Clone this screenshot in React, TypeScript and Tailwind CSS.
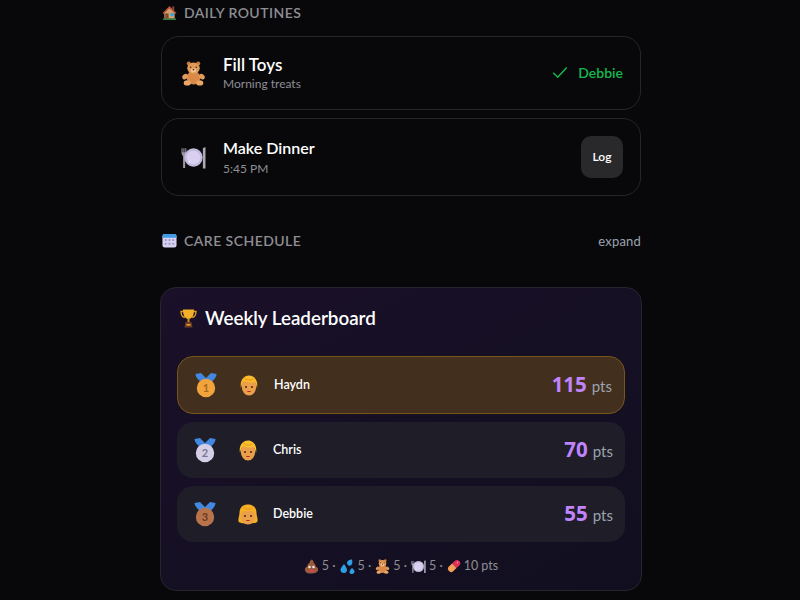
const font = { fontFamily: 'Lato, "Noto Sans", sans-serif' };
const digits = { fontFamily: '"Noto Sans", sans-serif' };

function House({ s = 15 }: { s?: number }) {
  return (
    <svg width={s} height={s} viewBox="0 0 16 16">
      <path d="M2.5 8v6.5h11V8L8 3z" fill="#d9a066" />
      <path d="M0.5 8.5L8 1l7.5 7.5-1 1L8 3.6 1.5 9.5z" fill="#b5533c" />
      <rect x="11" y="1.5" width="2" height="4" fill="#8a4a3a" />
      <rect x="3.5" y="9" width="3.5" height="5.5" fill="#7a4a34" />
      <rect x="9" y="8.5" width="3.5" height="3.5" fill="#38a3e0" />
      <rect x="1" y="14.5" width="14" height="1.2" fill="#3fae5a" />
    </svg>
  );
}

function Teddy({ s = 25 }: { s?: number }) {
  return (
    <svg width={s} height={s} viewBox="0 0 24 24">
      <circle cx="7.5" cy="2.5" r="2" fill="#c97a3a" />
      <circle cx="16.5" cy="2.5" r="2" fill="#c97a3a" />
      <ellipse cx="12" cy="16" rx="6.5" ry="6.5" fill="#d98a48" />
      <ellipse cx="4" cy="15" rx="3" ry="2.4" transform="rotate(-40 4 15)" fill="#e39a5a" />
      <ellipse cx="20" cy="15" rx="3" ry="2.4" transform="rotate(40 20 15)" fill="#e39a5a" />
      <ellipse cx="12" cy="7" rx="6" ry="5.5" fill="#e09a58" />
      <ellipse cx="12" cy="9" rx="2.6" ry="2" fill="#f4c48c" />
      <circle cx="9.3" cy="6" r="0.8" fill="#4a2a18" />
      <circle cx="14.7" cy="6" r="0.8" fill="#4a2a18" />
      <circle cx="12" cy="8.3" r="0.8" fill="#4a2a18" />
      <ellipse cx="6" cy="21" rx="3.4" ry="2.6" fill="#eba666" />
      <ellipse cx="18" cy="21" rx="3.4" ry="2.6" fill="#eba666" />
    </svg>
  );
}

function Plate({ s = 25 }: { s?: number }) {
  return (
    <svg width={s} height={s} viewBox="0 0 24 24">
      <path d="M0.5 3h1v4h.8V3h1v4h.8V3h1v5.5L4 11v11H2V11L0.5 8.5z" fill="#9a96a3" />
      <path d="M21 3l2.5-1v20.5H21z" fill="#aeaab5" />
      <circle cx="12" cy="12" r="8.8" fill="#c4bcdc" />
      <circle cx="12" cy="12" r="6.5" fill="#d8d0ee" />
      <circle cx="8" cy="16" r="0.8" fill="#f2eefc" />
    </svg>
  );
}

function Calendar({ s = 15 }: { s?: number }) {
  return (
    <svg width={s} height={s} viewBox="0 0 16 16">
      <rect x="0.5" y="1" width="15" height="14.5" rx="2.5" fill="#d6d2ee" />
      <path d="M0.5 5V3.5A2.5 2.5 0 0 1 3 1h10a2.5 2.5 0 0 1 2.5 2.5V5z" fill="#3f9ae8" />
      <g fill="#9c96c8">
        <rect x="3" y="6.5" width="2" height="2" />
        <rect x="7" y="6.5" width="2" height="2" />
        <rect x="11" y="6.5" width="2" height="2" />
        <rect x="3" y="10.5" width="2" height="2" />
        <rect x="7" y="10.5" width="2" height="2" />
        <rect x="11" y="10.5" width="2" height="2" />
      </g>
    </svg>
  );
}

function Trophy() {
  return (
    <svg width="17" height="19" viewBox="0 0 17 19">
      <path d="M3.5 2.5H1c0 4 1.2 5.5 3.8 6M13.5 2.5H16c0 4-1.2 5.5-3.8 6" fill="none" stroke="#e8a020" strokeWidth="1.3" />
      <path d="M3 0.5h11c0 5-1 9-5.5 9.5C4 9.5 3 5.5 3 0.5z" fill="#f4b029" />
      <path d="M7.5 9.5h2v4h-2z" fill="#d98e1c" />
      <path d="M5.5 13h6l1 5.5h-8z" fill="#6b3a2a" />
      <rect x="6.5" y="15" width="4" height="1.6" fill="#e8a020" />
    </svg>
  );
}

function Medal({ n, fill, ink }: { n: string; fill: string; ink: string }) {
  return (
    <svg width="22" height="25" viewBox="0 0 22 25">
      <path d="M0.5 1L6 0l5 5 5-5 5.500 1c0 3-3 7-7 9H8C4 8 .5 4 .5 1z" fill="#4287e0" />
      <circle cx="11" cy="15" r="9.2" fill={fill} />
      <text x="11" y="19" textAnchor="middle" fontSize="11" fontWeight="700" fill={ink}>{n}</text>
    </svg>
  );
}

function Face({ hair, long }: { hair: string; long?: boolean }) {
  return (
    <svg width="20" height="21" viewBox="0 0 20 21">
      {long && <path d="M1.500 9C1.500 3 5.500 .5 10 .5S18.500 3 18.500 9c0 3 1.500 5 1 8.500C18 20.500 2 20.500 .5 17.500 0 14 1.500 12 1.500 9z" fill={hair} />}
      <ellipse cx="10" cy="11.800" rx="7.200" ry="8.700" fill="#eb9f4a" />
      {!long && <path d="M2 13C.5 5 5 .5 10 .5s9.500 4.500 8 12.500c-.5-2.500-1.200-4.700-2.500-6-3 1-8 .5-10-1-1.700 1.500-3 4-3.500 7z" fill={hair} />}
      {long && <path d="M2.800 12C2.500 5.500 5.500 2 10 2s7.500 3.500 7.200 10c-.7-2.500-2-4.500-3.700-5.500-2 1.200-5 1.200-7 0-1.700 1-3 3-3.700 5.500z" fill={hair} />}
      <path d="M5.500 3.500c3 2 6 2 9 .5" fill="none" stroke="#e08c1c" strokeWidth="0.8" />
      <circle cx="7" cy="12" r="1" fill="#4a2414" />
      <circle cx="13" cy="12" r="1" fill="#4a2414" />
      <path d="M7.800 16h4.400c-.5 1.400-3.900 1.400-4.400 0z" fill="#b02f24" />
    </svg>
  );
}

function Poop() {
  return (
    <svg width="15" height="15" viewBox="0 0 15 15">
      <path d="M7.500 0.500c2 1 2.500 2.500 2 3.500 1.500 .5 2.500 2 2 3.500 2 .5 3 2 2.500 4-.5 2-3 3-6.500 3S1.500 14 1 11.500C.5 9.500 1.500 8 3.500 7.500 3 6 4 4.500 5.500 4 5.500 2.500 6.500 1.500 7.500 .5z" fill="#9a5a3c" />
      <circle cx="5.500" cy="8" r="1.300" fill="#f0e8e0" />
      <circle cx="9.500" cy="8" r="1.300" fill="#f0e8e0" />
      <path d="M4.500 11h6c0 2.500-6 2.500-6 0z" fill="#e0405a" />
    </svg>
  );
}

function Drops() {
  return (
    <svg width="15" height="15" viewBox="0 0 15 15" fill="#2f9fe6">
      <path d="M12 0.500c-2.500 0-5 1.500-5 3.500s2 3 3.500 2.500S13 3.500 12 .5z" />
      <path d="M4 5c-1.500 2-3.500 4-3.500 6S2 14 4 14s3-1.500 3-3-1.500-4-3-6z" />
      <path d="M12 9c-1 1-2.500 2.500-2.500 4s1 2 2.500 2 2.500-1 2.500-2.500S13 10 12 9z" />
    </svg>
  );
}

function Pill() {
  return (
    <svg width="14" height="14" viewBox="0 0 14 14">
      <path d="M8 1.800a3.200 3.200 0 0 1 4.500 4.500L9.500 9 5 4.500z" fill="#e0305a" />
      <path d="M5 4.500L9.500 9l-3.300 3.300a3.200 3.200 0 0 1-4.500-4.500z" fill="#f5a055" />
      <circle cx="10.500" cy="3.500" r="0.700" fill="#f8b0c0" />
    </svg>
  );
}

function Row({ medal, face, name, pts, top }: { medal: React.ReactNode; face: React.ReactNode; name: string; pts: string; top?: boolean }) {
  return (
    <div className={`flex items-center rounded-2xl pl-[17px] pr-[12px] ${top ? 'h-[58px] border border-[#7a5518] bg-[#422f1e]' : 'h-[56px] bg-[#1e1d28]'}`}>
      <span className="flex w-[22px] justify-center">{medal}</span>
      <span className="ml-[22px] flex w-[20px] justify-center">{face}</span>
      <span className="ml-[15px] text-[12.5px] font-semibold text-white">{name}</span>
      <span className="ml-auto flex -translate-y-[1px] items-baseline gap-[5px]">
        <span style={digits} className="text-[20.5px] leading-none font-bold text-[#c084fc]">{pts}</span>
        <span className="text-[15px] leading-none text-[#9ca3af]">pts</span>
      </span>
    </div>
  );
}

export default function App() {
  return (
    <div style={font} className="h-[600px] overflow-hidden bg-[#08080b]">
      <div className="mx-auto w-[480px] translate-x-px pt-[3px]">
        <div className="flex h-[18px] items-center gap-[7px] pl-[1px] text-[14px] font-semibold tracking-[0.45px] text-[#8e8e93]">
          <House />
          <span>DAILY ROUTINES</span>
        </div>
        <div className="mt-[15px] flex h-[74px] items-center rounded-[18px] border border-[#26262a] pl-[19px] pr-[17px]">
          <Teddy />
          <div className="ml-[17px]">
            <div className="translate-y-[1px] text-[17px] leading-[22px] font-semibold text-white">Fill Toys</div>
            <div className="text-[12px] leading-[18px] text-[#8e8e93]">Morning treats</div>
          </div>
          <div className="ml-auto flex -translate-y-[1px] items-center gap-[9px] text-[14px] font-semibold text-[#16b84e]">
            <svg width="18" height="18" viewBox="0 0 24 24" fill="none" stroke="currentColor" strokeWidth="2"><path d="M3 13l6 6L21 6" /></svg>
            <span>Debbie</span>
          </div>
        </div>
        <div className="mt-[8px] flex h-[78px] items-center rounded-[18px] border border-[#26262a] pl-[19px] pr-[17px]">
          <Plate />
          <div className="ml-[17px]">
            <div className="text-[16px] leading-[22px] font-semibold text-white">Make Dinner</div>
            <div className="translate-y-[1px] text-[12px] leading-[18px] text-[#8e8e93]">5:45 PM</div>
          </div>
          <button className="ml-auto h-[42px] w-[42px] rounded-[10px] bg-[#29292c] text-[12px] font-semibold text-white">Log</button>
        </div>
        <div className="mt-[34px] flex h-[20px] items-center gap-[7px] pl-[1px] text-[14px] font-semibold tracking-[0.45px] text-[#8e8e93]">
          <Calendar />
          <span>CARE SCHEDULE</span>
          <span className="ml-auto translate-y-[2px] text-[13px] font-normal tracking-[0.2px] text-[#9ca3af]">expand</span>
        </div>
        <div className="-mx-px mt-[37px] h-[304px] rounded-2xl border border-[#25252d] bg-linear-to-br from-[#1a1029] to-[#110f1f] px-[16px]">
          <div className="flex h-[60px] items-center gap-[8px] pl-[3px] text-[18.8px] font-semibold text-white">
            <Trophy />
            <span>Weekly Leaderboard</span>
          </div>
          <div className="mt-[8px] flex flex-col gap-[8px]">
            <Row medal={<Medal n="1" fill="#f2a33c" ink="#a86a1c" />} face={<Face hair="#fbb92c" />} name="Haydn" pts="115" top />
            <Row medal={<Medal n="2" fill="#d4cee6" ink="#7a7690" />} face={<Face hair="#fcc02e" />} name="Chris" pts="70" />
            <Row medal={<Medal n="3" fill="#b8734a" ink="#6a3a24" />} face={<Face hair="#f7b024" long />} name="Debbie" pts="55" />
          </div>
          <div className="mt-[15px] flex items-center justify-center gap-[3px] text-[12.5px] text-[#8e8e93]">
            <Poop /><span className="mr-[1px]">5 ·</span><Drops /><span className="mr-[1px]">5 ·</span><Teddy s={15} /><span className="mr-[1px]">5 ·</span><Plate s={15} /><span className="mr-[1px]">5 ·</span><Pill /><span>10 pts</span>
          </div>
        </div>
      </div>
    </div>
  );
}
